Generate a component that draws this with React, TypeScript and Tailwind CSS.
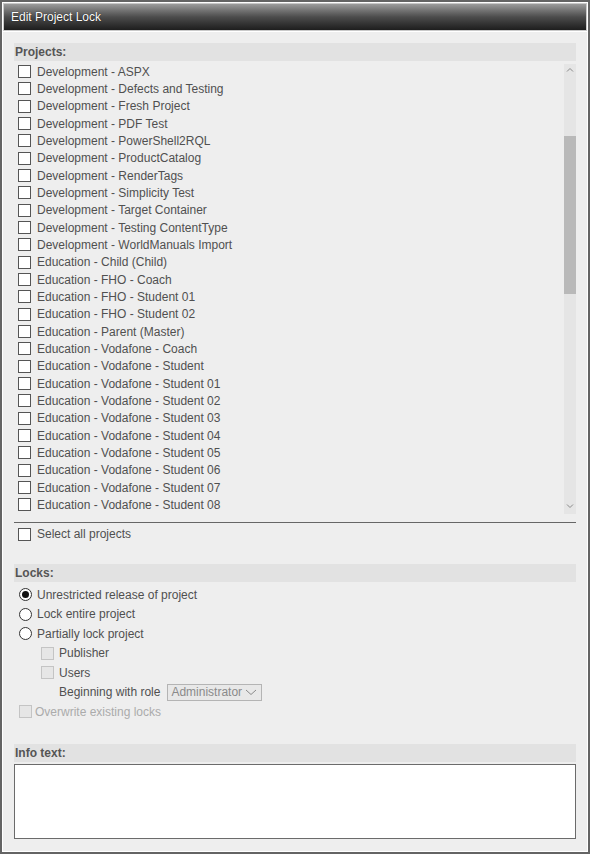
import React from "react";

const projects = [
  "Development - ASPX",
  "Development - Defects and Testing",
  "Development - Fresh Project",
  "Development - PDF Test",
  "Development - PowerShell2RQL",
  "Development - ProductCatalog",
  "Development - RenderTags",
  "Development - Simplicity Test",
  "Development - Target Container",
  "Development - Testing ContentType",
  "Development - WorldManuals Import",
  "Education - Child (Child)",
  "Education - FHO - Coach",
  "Education - FHO - Student 01",
  "Education - FHO - Student 02",
  "Education - Parent (Master)",
  "Education - Vodafone - Coach",
  "Education - Vodafone - Student",
  "Education - Vodafone - Student 01",
  "Education - Vodafone - Student 02",
  "Education - Vodafone - Student 03",
  "Education - Vodafone - Student 04",
  "Education - Vodafone - Student 05",
  "Education - Vodafone - Student 06",
  "Education - Vodafone - Student 07",
  "Education - Vodafone - Student 08",
];

const Box = ({ disabled = false }: { disabled?: boolean }) => (
  <span
    className={
      disabled
        ? "inline-block w-[13px] h-[13px] border border-[#c4c4c4] bg-[#e6e6e6] shrink-0"
        : "inline-block w-[13px] h-[13px] border border-[#555] bg-white shrink-0"
    }
  />
);

const Radio = ({ checked = false }: { checked?: boolean }) => (
  <span className="w-[13px] h-[13px] rounded-full border border-[#333] bg-white shrink-0 flex items-center justify-center">
    {checked && <span className="w-[7px] h-[7px] rounded-full bg-[#111]" />}
  </span>
);

const Bar = ({ children }: { children: React.ReactNode }) => (
  <div className="h-[18px] bg-[#e2e2e2] pl-px flex items-center font-bold text-[#555]">
    {children}
  </div>
);

const App = () => {
  return (
    <div
      className="w-[591px] h-[854px] bg-white text-[12px] text-[#505050]"
      style={{ fontFamily: '"Liberation Sans", Arial, sans-serif' }}
    >
      <div className="w-[590px] h-[854px] border-2 border-[#646464] p-px flex flex-col">
        {/* header */}
        <div className="h-[28px] border border-[#c9c9c9] bg-gradient-to-b from-[#9c9c9c] via-[#4c4c4c] to-[#1e1e1e] flex items-center pl-[7px] text-white [text-shadow:0_0_1px_#000]">
          Edit Project Lock
        </div>

        <div className="flex-1 mt-px bg-[#eeeeee] pt-[11px] pl-[11px] pr-[11px] flex flex-col">
          <Bar>Projects:</Bar>

          <div className="relative h-[454px] mt-[2px] overflow-hidden">
            <div className="pr-[14px]">
              {projects.map((p) => (
                <div key={p} className="h-[17.33px] flex items-center pl-[4px] gap-[6px]">
                  <Box />
                  <span>{p}</span>
                </div>
              ))}
            </div>
            {/* scrollbar */}
            <div className="absolute right-0 top-px w-[12px] h-[450px] bg-[#e5e5e5]">
              <svg className="absolute left-[2px] top-[3px]" width="8" height="6" viewBox="0 0 8 6">
                <path d="M1 4.5 L4 1.5 L7 4.5" fill="none" stroke="#8a8a8a" strokeWidth="1" />
              </svg>
              <div className="absolute left-0 top-[72px] w-[12px] h-[158px] bg-[#b9b9b9]" />
              <svg className="absolute left-[2px] bottom-[5px]" width="8" height="6" viewBox="0 0 8 6">
                <path d="M1 1.5 L4 4.5 L7 1.5" fill="none" stroke="#8a8a8a" strokeWidth="1" />
              </svg>
            </div>
          </div>

          <div className="h-px bg-[#666] mt-[5px]" />
          <div className="h-[18px] flex items-center pl-[4px] gap-[6px] mt-[2px]">
            <Box />
            <span>Select all projects</span>
          </div>

          <div className="mt-[21px]">
            <Bar>Locks:</Bar>
          </div>
          <div className="mt-[3px]">
            <div className="h-[19.5px] flex items-center pl-[5px] gap-[5px]">
              <Radio checked />
              <span>Unrestricted release of project</span>
            </div>
            <div className="h-[19.5px] flex items-center pl-[5px] gap-[5px]">
              <Radio />
              <span>Lock entire project</span>
            </div>
            <div className="h-[19.5px] flex items-center pl-[5px] gap-[5px]">
              <Radio />
              <span>Partially lock project</span>
            </div>
            <div className="h-[19.5px] flex items-center pl-[27px] gap-[5px]">
              <Box disabled />
              <span>Publisher</span>
            </div>
            <div className="h-[19.5px] flex items-center pl-[27px] gap-[5px]">
              <Box disabled />
              <span>Users</span>
            </div>
            <div className="h-[19.5px] flex items-center pl-[45px] gap-[7px]">
              <span>Beginning with role</span>
              <div className="w-[95px] h-[17px] border border-[#b4b4b4] bg-[#e8e8e8] flex items-center pl-[3px] text-[#8a8a8a]">
                <span className="flex-1">Administrator</span>
                <svg width="14" height="10" viewBox="0 0 14 10" className="mr-[3px]">
                  <path d="M2 3 L7 7.5 L12 3" fill="none" stroke="#8a8a8a" strokeWidth="1" />
                </svg>
              </div>
            </div>
            <div className="h-[19.5px] flex items-center pl-[5px] gap-[3px] text-[#ababab]">
              <Box disabled />
              <span>Overwrite existing locks</span>
            </div>
          </div>

          <div className="mt-[22px]">
            <Bar>Info text:</Bar>
          </div>
          <div className="mt-[2px] h-[75px] bg-white border border-[#6b6b6b]" />
        </div>
      </div>
    </div>
  );
};

export default App;
